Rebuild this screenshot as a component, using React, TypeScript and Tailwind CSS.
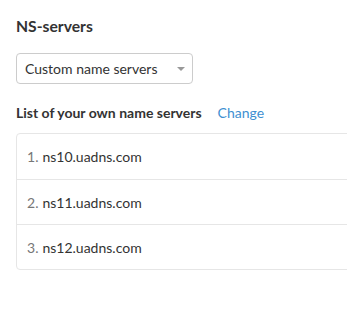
const servers = ["ns10.uadns.com", "ns11.uadns.com", "ns12.uadns.com"];

export default function App() {
  return (
    <div className="h-[313px] w-[347px] overflow-hidden bg-white pl-4 pt-[15px] font-['Lato',sans-serif] text-[#333]">
      <h2 className="text-[15.7px] font-bold leading-[22px]">NS-servers</h2>

      {/* select */}
      <div className="mt-[16px] flex h-[31px] w-[177px] items-center rounded-[4px] border border-[#ccc] pl-[8px] pr-[7px] text-[14px]">
        <span>Custom name servers</span>
        <span className="ml-auto h-0 w-0 border-x-[4px] border-t-[4px] border-x-transparent border-t-[#999]" />
      </div>

      <div className="mt-[20px] flex items-center text-[14px] leading-[18px]">
        <span className="font-bold">List of your own name servers</span>
        <a className="ml-[16px] text-[#3d8fd1]">Change</a>
      </div>

      <ol className="mt-[11px] w-[340px] rounded-[4px] border border-[#e6e6e6]">
        {servers.map((s, i) => (
          <li
            key={s}
            className={
              "flex h-[45px] items-center pl-[10px] text-[14px] " +
              (i > 0 ? "border-t border-[#e6e6e6]" : "")
            }
          >
            <span className="text-[#777]">{i + 1}.</span>
            <span className="ml-[4px]">{s}</span>
          </li>
        ))}
      </ol>
    </div>
  );
}
